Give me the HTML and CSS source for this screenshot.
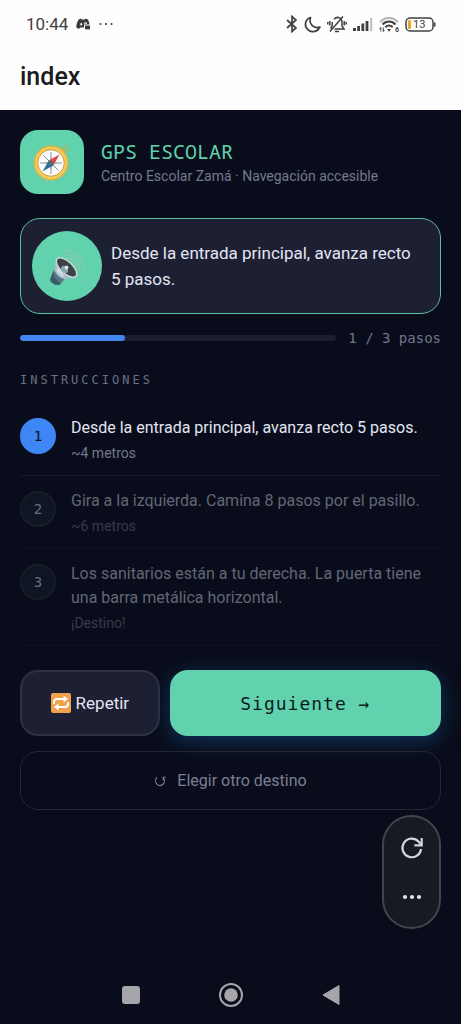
FILE: index.html
```html
<!DOCTYPE html>
<html lang="es">
<head>
<meta charset="utf-8">
<meta name="viewport" content="width=device-width, initial-scale=1">
<title>index</title>
<link rel="stylesheet" href="styles.css">
</head>
<body>
<div class="topbar">
  <div class="status">
    <div class="status-left">
      <span class="clock">10:44</span>
      <svg width="15" height="12" viewBox="0 0 15 12"><path d="M3 1.200 5 .6l.6.8h3.200l.7-.8 2 .6c1.500 2 2 3.700 1.800 5.300H8v3H4.500L3 10.800C1.500 10.600.7 9.900.3 9.300.3 6.500 1.200 3.200 3 1.200z" fill="#3a3a3c"/><ellipse cx="5.200" cy="6.200" rx=".9" ry="1.300" fill="#fff"/><path d="M8 4.500h3v1.200H8z" fill="#fff"/><path d="M9 7.500h5v3.800H9z" fill="#3a3a3c"/></svg>
      <svg width="14" height="4" viewBox="0 0 14 4" fill="#444"><circle cx="1.500" cy="2" r="1.100"/><circle cx="7" cy="2" r="1.100"/><circle cx="12.500" cy="2" r="1.100"/></svg>
    </div>
    <div class="status-right">
      <svg width="12" height="18" viewBox="0 0 12 18" fill="none" stroke="#404042" stroke-width="1.700"><path d="M1 5l9 8-4 3.500v-15L10 5l-9 8"/></svg>
      <svg width="17" height="17" viewBox="0 0 17 17" fill="none" stroke="#404042" stroke-width="1.700" stroke-linejoin="round"><path d="M6.500 1.500C.5 3.500-.2 11 4.600 14.300c4 2.700 9.400 1.200 11.300-3.200C9.500 13 4.500 8 6.500 1.500z"/></svg>
      <svg width="20" height="18" viewBox="0 0 20 18" fill="none" stroke="#404042" stroke-width="1.500"><path d="M7 4.200C11 .3 15 3.500 15 7v4l2 3H7.500M5.200 7v4l-1.700 2.500M16 1.500 3 16.500M8 16.500h4M2.800 6v4.500M.8 7v2.500M17.200 6v4.500M19.200 7v2.500"/></svg>
      <svg width="20" height="15" viewBox="0 0 20 15" fill="#404042"><path d="M0 11h3v3H0zM4.200 9h2.800v5H4.200zM8.400 6.500h2.800V14H8.400zM12.600 4h2.800v10h-2.800z"/><path d="M17 1h2.300v13H17z" fill="#c4c4c6"/></svg>
      <svg width="20" height="17" viewBox="0 0 20 17" fill="none" stroke="#404042" stroke-width="2"><path d="M1 6C6 .5 14 .5 19 6" stroke="#b4b4b6"/><path d="M3.500 8.500c3.700-4 9.300-4 13 0M6.300 11.200c2.200-2.200 5.200-2.200 7.400 0"/><path d="M8 13h4l-2 2.800z" fill="#404042" stroke="none"/><path d="M1.800 15.500v-4L.5 13M4.300 11.500v4L5.500 14" stroke-width="1"/><text class="wifi-gen" x="16" y="16">6</text></svg>
      <svg width="31" height="15" viewBox="0 0 31 15"><rect x="1" y="1" width="27" height="13" rx="4" fill="none" stroke="#404042" stroke-width="1.500"/><rect x="3" y="3" width="3" height="9" rx="1" fill="#e7a72e"/><path d="M29 5.500h1.500v4H29z" fill="#404042"/><text class="battery-text" x="8" y="11">13</text></svg>
    </div>
  </div>
  <div class="app-title">index</div>
</div>

<main class="page">
  <header class="brand">
    <div class="logo">
      <svg width="38" height="38" viewBox="0 0 38 38"><circle cx="32" cy="5.500" r="2.600" fill="none" stroke="#a9b765" stroke-width="1.500"/><path d="m26 8 4-2 2 3-2 4z" fill="#d7ab38"/><circle cx="18" cy="20" r="17.500" fill="#e0b13f"/><circle cx="18" cy="20" r="16.300" fill="#f0cb58"/><circle cx="18" cy="20" r="13.300" fill="#fafafa" stroke="#cf9c38"/><path d="M18 9v22M7 20h22M10.500 12.500l15 15" stroke="#8295a0" stroke-width="1"/><path d="m18 13 1.500 5.500L25 20l-5.500 1.500L18 27l-1.500-5.500L11 20l5.500-1.500z" fill="#9aabb4"/><path d="M26.500 11.500 15.800 17.500l4.700 4.800z" fill="#d94a43"/><path d="m9.500 28.500 6.300-11 4.700 4.800z" fill="#286e98"/><circle cx="18" cy="20" r="2.200" fill="#526b7d"/></svg>
    </div>
    <div class="brand-text">
      <h1 class="brand-name">GPS ESCOLAR</h1>
      <p class="brand-sub">Centro Escolar Zamá · Navegación accesible</p>
    </div>
  </header>

  <section class="speech">
    <button class="speaker" type="button" aria-label="Escuchar">
      <svg width="40" height="40" viewBox="0 0 40 40"><g fill="none" stroke="#84c8b0" stroke-width="1.700" stroke-linecap="round"><path d="M20 12.500c5-1 9 4 7.500 9"/><path d="M19 9c8-2 15 7 12.500 15.500"/><path d="M18 5.500c11-3 21.500 9.500 17.500 21.500"/></g><path d="m7 23-4 11c1.500 3.500 5.500 5.500 9.500 5l6-7z" fill="#557784"/><path d="m6 26-3 8c1.500 3.500 5.500 5.500 9.500 5l1-2C10 35 6.500 31 6 26z" fill="#3c5a67"/><path d="M10 12 7 24c1.500 4 5.500 8 11 9.500L29 31z" fill="#a5bcc5"/><path d="M11 17 9.500 25c1.500 3 4.500 5.500 8 6.500z" fill="#cbdbe0"/><ellipse cx="19.500" cy="21.500" rx="12.800" ry="6" transform="rotate(43 19.500 21.500)" fill="#3b4347" stroke="#c9d6da" stroke-width="1.500"/><ellipse cx="17.500" cy="23.500" rx="4" ry="3" transform="rotate(43 17.500 23.500)" fill="#8fa3ab"/><circle cx="19.500" cy="21.500" r="1.900" fill="#e0e8ea"/></svg>
    </button>
    <p class="speech-text">Desde la entrada principal, avanza recto 5 pasos.</p>
  </section>

  <div class="progress">
    <div class="track"><div class="fill"></div></div>
    <span class="count">1 / 3 pasos</span>
  </div>

  <h2 class="section-title">INSTRUCCIONES</h2>
  <ol class="steps">
    <li class="step step-active">
      <span class="num">1</span>
      <div><p class="step-text">Desde la entrada principal, avanza recto 5 pasos.</p><p class="step-note">~4 metros</p></div>
    </li>
    <li class="step">
      <span class="num">2</span>
      <div><p class="step-text">Gira a la izquierda. Camina 8 pasos por el pasillo.</p><p class="step-note">~6 metros</p></div>
    </li>
    <li class="step">
      <span class="num">3</span>
      <div><p class="step-text">Los sanitarios están a tu derecha. La puerta tiene una barra metálica horizontal.</p><p class="step-note">¡Destino!</p></div>
    </li>
  </ol>

  <div class="actions">
    <button class="btn btn-repeat" type="button">
      <svg width="20" height="20" viewBox="0 0 20 20"><rect width="20" height="20" rx="2" fill="#f1a04c"/><g fill="none" stroke="#fff" stroke-width="2"><path d="M3 11V9q0-3 3-3h8M17 9v2q0 3-3 3H6"/></g><path d="m12.500 2.500 4.500 3.500-4.500 3.500zM7.500 10.500 3 14l4.500 3.500z" fill="#fff"/></svg>
      Repetir
    </button>
    <button class="btn btn-next" type="button">Siguiente →</button>
  </div>
  <button class="btn btn-other" type="button">
    <svg width="12" height="12" viewBox="0 0 12 12" fill="none" stroke="#7c7f94" stroke-width="1.100"><path d="M3 2.500a4.500 4.500 0 1 0 6.500.5M9.200 5.500V2.300H12"/></svg>
    Elegir otro destino
  </button>
</main>

<div class="fab">
  <button class="fab-btn" type="button" aria-label="Recargar">
    <svg width="24" height="24" viewBox="0 0 24 24" fill="none" stroke="#d3d4d8" stroke-width="2.200"><path d="M21 13a9.300 9.300 0 1 1-2.500-7.500L21.500 9"/><path d="M21.700 2v7.300h-7.300"/></svg>
  </button>
  <button class="fab-btn" type="button" aria-label="Más opciones">
    <svg width="20" height="6" viewBox="0 0 20 6" fill="#e2e3e6"><circle cx="3" cy="3" r="2.100"/><circle cx="10" cy="3" r="2.100"/><circle cx="17" cy="3" r="2.100"/></svg>
  </button>
</div>

<nav class="sysnav">
  <button class="nav-btn" type="button" aria-label="Recientes"><svg width="24" height="24" viewBox="0 0 24 24"><rect x="3" y="3" width="18" height="18" rx="3" fill="#a5a5aa"/></svg></button>
  <button class="nav-btn" type="button" aria-label="Inicio"><svg width="24" height="24" viewBox="0 0 24 24"><circle cx="12" cy="12" r="11" fill="none" stroke="#a5a5aa" stroke-width="2"/><circle cx="12" cy="12" r="6.800" fill="#a5a5aa"/></svg></button>
  <button class="nav-btn" type="button" aria-label="Atrás"><svg width="24" height="24" viewBox="0 0 24 24"><path d="M4 12 20 2.500v19z" fill="#a5a5aa" stroke="#a5a5aa" stroke-linejoin="round"/></svg></button>
</nav>
</body>
</html>
```
FILE: styles.css
```css
* { box-sizing: border-box; }
body {
  margin: 0;
  min-height: 100vh;
  display: flex;
  flex-direction: column;
  background: #090d1b;
  color: #e4e5f3;
  font-family: Roboto, "Noto Sans", sans-serif;
}
h1, h2, p, ol { margin: 0; padding: 0; }
button { font-family: inherit; border: 0; padding: 0; cursor: pointer; }
svg { display: block; flex: none; }

.topbar { background: #fefefe; color: #1c1c1e; padding: 12px 20px 18px; }
.status { display: flex; justify-content: space-between; align-items: center; height: 24px; padding: 0 5px 0 6px; }
.status-left { display: flex; align-items: center; gap: 8px; }
.status-right { display: flex; align-items: center; gap: 6px; }
.clock { font-size: 17px; color: #3e3e40; }
.wifi-gen { font: bold 7px Roboto, sans-serif; fill: #404042; stroke: none; }
.battery-text { font: 11px Roboto, sans-serif; fill: #404042; }
.app-title { margin-top: 26px; font-size: 25px; line-height: 30px; font-weight: 500; }

.page { display: flex; flex-direction: column; padding: 20px; }
.brand { display: flex; align-items: center; gap: 17px; }
.logo { display: flex; align-items: center; justify-content: center; width: 64px; height: 64px; border-radius: 18px; background: #62d2ae; }
.brand-name { font: 20px/28px "Noto Sans Mono", "DejaVu Sans Mono", monospace; color: #62d2ae; }
.brand-sub { font-size: 14px; line-height: 20px; color: #747990; }

.speech { display: flex; align-items: center; gap: 9px; margin-top: 24px; padding: 11px 22px 11px 11px; min-height: 96px; border: 1px solid #5fbda3; border-radius: 20px; background: #1d2033; }
.speaker { display: flex; align-items: center; justify-content: center; flex: none; width: 70px; height: 70px; border-radius: 50%; background: #62d2ae; }
.speech-text { font-size: 17px; line-height: 26px; }

.progress { display: flex; align-items: center; gap: 12px; margin-top: 14px; height: 20px; }
.track { flex: 1; height: 6px; border-radius: 3px; background: #1c1f30; overflow: hidden; }
.fill { width: 33.333%; height: 100%; border-radius: 3px; background: #4485f4; }
.count { font: 14px/20px "DejaVu Sans Mono", monospace; color: #707489; }

.section-title { margin-top: 22px; font: 12px/20px "DejaVu Sans Mono", monospace; letter-spacing: 3px; color: #6b7084; }
.steps { margin-top: 13px; list-style: none; }
.step { display: flex; gap: 15px; padding: 13px 0 12px; border-bottom: 1px solid #10131f; color: #636675; }
.num { display: flex; align-items: center; justify-content: center; flex: none; width: 36px; height: 36px; margin-top: 2px; border: 2px solid #181d2a; border-radius: 50%; background: #0f1523; font: 14px "DejaVu Sans Mono", monospace; color: #686d7b; }
.step-text { font-size: 16px; line-height: 24px; }
.step-note { margin-top: 3px; font-size: 14px; line-height: 20px; color: #363b4b; }
.step-active { border-color: #151927; color: #e4e5f3; }
.step-active .num { border-color: #3e86f6; background: #3e86f6; color: #090d1b; }
.step-active .step-note { color: #74788f; }

.actions { display: grid; grid-template-columns: 34fr 66fr; gap: 10px; margin-top: 24px; }
.btn { display: flex; align-items: center; justify-content: center; border-radius: 18px; }
.btn-repeat { gap: 5px; height: 66px; border: 2px solid #2d3143; background: #1d2033; color: #e4e5f3; font-size: 17px; }
.btn-next { height: 66px; background: #62d2ae; color: #0a1a1d; font: 18px "DejaVu Sans Mono", monospace; letter-spacing: 1px; box-shadow: 0 5px 20px #10325a; }
.btn-other { gap: 11px; height: 59px; margin-top: 15px; border: 1px solid #242735; background: transparent; color: #7b7e94; font-size: 16px; }

.fab { position: fixed; right: 20px; bottom: 95px; display: flex; flex-direction: column; width: 59px; padding: 6px 0; border: 2px solid #42454c; border-radius: 30px; background: #171a21; }
.fab-btn { display: flex; align-items: center; justify-content: center; height: 49px; background: transparent; }
.sysnav { display: flex; justify-content: center; gap: 76px; margin-top: auto; padding-bottom: 17px; }
.nav-btn { background: transparent; }
```
